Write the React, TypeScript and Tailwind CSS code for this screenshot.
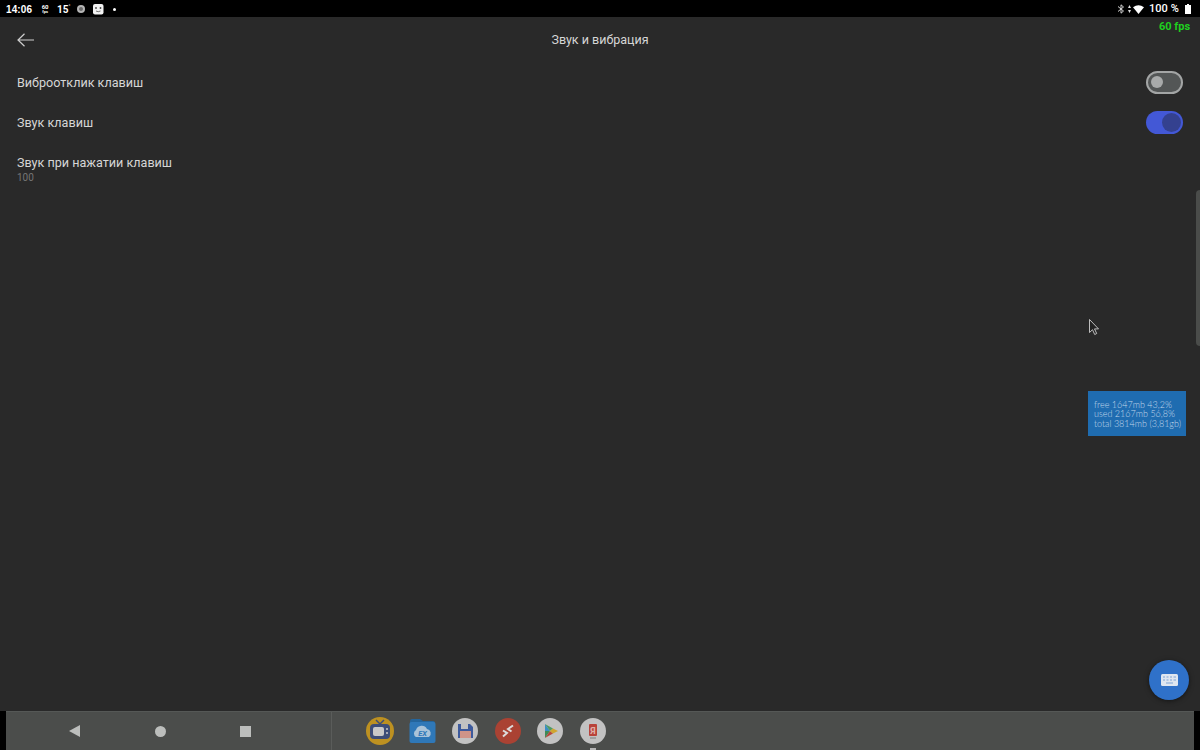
function Toggle({ on }: { on: boolean }) {
  return on ? (
    <div className="flex h-[23px] w-[37px] items-center justify-end rounded-full bg-[#4358d6] pr-[2px]">
      <div className="h-[19px] w-[19px] rounded-full bg-[#34418f]" />
    </div>
  ) : (
    <div className="flex h-[23px] w-[37px] items-center rounded-full border-2 border-[#a3a5a5] bg-[#535656] pl-[3px]">
      <div className="h-[12px] w-[12px] rounded-full bg-[#a8aaaa]" />
    </div>
  )
}

function StatusBar() {
  return (
    <div className="flex h-[17px] items-center justify-between bg-black pl-[6px] pr-[9px] pt-[1px] text-white">
      <div className="flex items-center">
        <span className="text-[10px] font-bold tracking-[0.1px] font-['Liberation_Sans',sans-serif]">14:06</span>
        <div className="ml-[9px] flex w-[8px] flex-col items-center text-[6px] font-bold leading-[5px]">
          <span>60</span>
          <span className="text-[4px]">fps</span>
        </div>
        <span className="ml-[8px] text-[10px] font-bold">15</span>
        <span className="mb-[4px] text-[5px] font-bold">°</span>
        <svg className="ml-[5px]" width="10" height="10" viewBox="0 0 10 10">
          <circle cx="5" cy="5" r="4" fill="#b5b5b5" />
          <circle cx="5" cy="5" r="2" fill="#6a6a6a" />
        </svg>
        <svg className="ml-[6px]" width="12" height="12" viewBox="0 0 12 12">
          <rect x="1" y="1" width="10.5" height="10.5" rx="2" fill="#f2f2f2" />
          <circle cx="4" cy="5" r="0.9" fill="#444" />
          <circle cx="8.5" cy="5" r="0.9" fill="#444" />
          <path d="M4 8q2.2 1.4 4.5 0" stroke="#555" strokeWidth="0.8" fill="none" />
        </svg>
        <div className="ml-[9px] h-[3px] w-[3px] rounded-full bg-white" />
      </div>
      <div className="flex items-center">
        <svg width="8" height="10" viewBox="0 0 8 10" fill="none" stroke="#d5d5d5" strokeWidth="1">
          <path d="M1 2.5 6.5 7 4 9.2V.8L6.5 3 1 7.5" />
        </svg>
        <svg className="ml-[3px]" width="3" height="10" viewBox="0 0 3 10" fill="#e0e0e0">
          <path d="M1.5 1 3 4H0zM1.5 9 0 6h3z" />
        </svg>
        <svg className="ml-[2px]" width="11" height="9" viewBox="0 0 11 9" fill="#fff">
          <path d="M0 2.2Q5.500-1.500 11 2.200L5.500 9z" />
        </svg>
        <span className="ml-[5px] text-[11px] font-medium tracking-[0.1px]">100 %</span>
        <svg className="ml-[6px]" width="6" height="10" viewBox="0 0 6 10" fill="#fff">
          <path d="M2 0h2v1h2v9H0V1h2z" />
        </svg>
      </div>
    </div>
  )
}

function SettingRow({ label, sub, on }: { label: string; sub?: string; on?: boolean }) {
  return (
    <div className={sub ? 'flex flex-col px-[17px] pt-[12px]' : 'flex h-[40px] items-center justify-between px-[17px]'}>
      <span className={sub ? 'text-[12.6px] leading-[18px] text-[#d6d6d6]' : 'pt-[1px] text-[12.6px] leading-[18px] text-[#d6d6d6]'}>{label}</span>
      {sub && <span className="text-[10px] leading-[12px] text-[#757575]">{sub}</span>}
      {on !== undefined && <Toggle on={on} />}
    </div>
  )
}

function DockSlot({ children }: { children: React.ReactNode }) {
  return <div className="flex w-[28px] justify-center">{children}</div>
}

function DockIcons() {
  return (
    <div className="ml-[34px] flex items-center gap-[14.6px]">
      <DockSlot>
        <svg width="28" height="28" viewBox="0 0 28 28">
          <circle cx="14" cy="14" r="14" fill="#bd9121" />
          <path d="M10 3l4 4 4-4" stroke="#3d4d78" strokeWidth="1.500" fill="none" />
          <rect x="4" y="7" width="20" height="15" rx="4" fill="#3d4d78" />
          <rect x="7" y="10" width="11" height="9" rx="2" fill="#c9c9c9" />
          <circle cx="21" cy="12" r="1" fill="#c9c9c9" />
          <circle cx="21" cy="16" r="1" fill="#c9c9c9" />
        </svg>
      </DockSlot>
      <DockSlot>
        <svg width="27" height="28" viewBox="0 0 27 28">
          <path d="M1 4a2 2 0 0 1 2-2h8l3 2h10a2 2 0 0 1 2 2v4H1z" fill="#24659c" />
          <rect x="0.500" y="5" width="26" height="21" rx="2" fill="#2f78b8" />
          <path d="M7 20a4 4 0 0 1 0-7 6 6 0 0 1 11-1 4.500 4.500 0 0 1 2 8z" fill="#a9c3d9" />
          <text x="13.500" y="19" fontSize="7.500" fontStyle="italic" fontWeight="700" textAnchor="middle" fill="#2f78b8">EX</text>
        </svg>
      </DockSlot>
      <DockSlot>
        <svg width="26" height="26" viewBox="0 0 26 26">
          <circle cx="13" cy="13" r="13" fill="#c2c2c2" />
          <path d="M6 6h12l3 3v11H6z" fill="#3d5a9c" />
          <rect x="9" y="6" width="7" height="5" fill="#c2c2c2" />
          <rect x="8" y="13" width="11" height="7" fill="#cf9488" />
        </svg>
      </DockSlot>
      <DockSlot>
        <svg width="26" height="26" viewBox="0 0 26 26">
          <circle cx="13" cy="13" r="13" fill="#aa4233" />
          <path d="M18 7.500 13 11l3.500 2.500M8 12.500l4 2.500-4 3.500" stroke="#dcdcdc" strokeWidth="2" fill="none" />
        </svg>
      </DockSlot>
      <DockSlot>
        <svg width="26" height="26" viewBox="0 0 26 26">
          <circle cx="13" cy="13" r="13" fill="#c2c2c2" />
          <path d="M8 6v7h5z" fill="#3a8fc4" />
          <path d="M8 20v-7h5z" fill="#3f8a57" />
          <path d="M8 6l5 7 3-2.500z" fill="#4f9a66" />
          <path d="M8 20l5-7 3 2.500z" fill="#b6483c" />
          <path d="M16 10.500 21 13l-5 2.500-3-2.500z" fill="#cfa52e" />
        </svg>
      </DockSlot>
      <DockSlot>
        <svg width="26" height="26" viewBox="0 0 26 26">
          <circle cx="13" cy="13" r="13" fill="#c2c2c2" />
          <rect x="9" y="6" width="8" height="12" rx="1" fill="#b8433a" />
          <path d="M10 20h6" stroke="#a0a0a0" strokeWidth="2" />
          <text x="13" y="15.500" fontSize="9" fontWeight="700" textAnchor="middle" fill="#e0b0a8">Я</text>
        </svg>
      </DockSlot>
    </div>
  )
}

function NavBar() {
  return (
    <div className="flex h-[39px] bg-black px-[6px]">
      <div className="relative flex flex-1 items-center border-t border-[#555856] bg-[#4b4d4b]">
        <div className="flex h-full w-[326px] shrink-0 items-center border-r border-[#5a5c5a] pl-[63px]">
          <svg width="11" height="12" viewBox="0 0 11 12" fill="#bcbebc">
            <path d="M0 6 11 0v12z" />
          </svg>
          <div className="ml-[75px] h-[11px] w-[11px] rounded-full bg-[#bcbebc]" />
          <div className="ml-[74px] h-[11px] w-[11px] bg-[#bcbebc]" />
        </div>
        <DockIcons />
        <div className="absolute bottom-0 left-[584px] h-[2px] w-[6px] bg-[#b5b5b5]" />
      </div>
    </div>
  )
}

export default function App() {
  return (
    <div className="relative flex h-[750px] w-[1200px] flex-col overflow-hidden bg-[#292929] font-['Roboto',sans-serif]">
      <StatusBar />
      <div className="flex-1">
        <div className="relative flex h-[45px] items-center justify-center">
          <svg className="absolute left-[17px] top-[16px]" width="17" height="14" viewBox="0 0 17 14" fill="none" stroke="#cfcfcf" strokeWidth="1.200">
            <path d="M17 7H1M7.500 .8 1 7l6.500 6.200" />
          </svg>
          <span className="pt-[2px] text-[12.5px] text-[#d6d6d6]">Звук и вибрация</span>
        </div>
        <SettingRow label="Виброотклик клавиш" on={false} />
        <SettingRow label="Звук клавиш" on={true} />
        <SettingRow label="Звук при нажатии клавиш" sub="100" />
      </div>
      <NavBar />

      <span className="absolute left-[1159px] top-[19px] whitespace-nowrap text-[11px] font-bold text-[#1fd01f]">60 fps</span>

      <div className="absolute right-0 top-[190px] h-[156px] w-[4px] rounded-l-[6px] bg-[#4a4c4a]" />

      <svg className="absolute left-[1088px] top-[318px]" width="12" height="18" viewBox="0 0 12 18">
        <path d="M1.500 1.500v13l3-2.800 2.200 4.800 2-1-2.200-4.600h4z" fill="#222" stroke="#cfcfcf" strokeWidth="0.900" />
      </svg>

      <div className="absolute left-[1088px] top-[391px] flex h-[45px] w-[98px] flex-col justify-center whitespace-nowrap bg-[#1f6cb0] pl-[6px] pt-[1px] text-[9px] font-light leading-[9.500px] text-[#c0d6ea] font-['Lato',sans-serif]">
        <span>free 1647mb 43,2%</span>
        <span>used 2167mb 56,8%</span>
        <span>total 3814mb (3,81gb)</span>
      </div>

      <div className="absolute left-[1149px] top-[660px] flex h-[40px] w-[40px] items-center justify-center rounded-full bg-[#2f71c9] shadow-[0_1px_5px_rgba(0,0,0,0.5)]">
        <svg width="17" height="12" viewBox="0 0 17 12">
          <rect width="17" height="12" rx="1.500" fill="#dfe6f0" />
          <path d="M2 3h2M5.500 3h2M9 3h2M12.500 3h2.500M2 6h2M5.500 6h2M9 6h2M12.500 6h2.500M5 9h7" stroke="#7fa3d6" strokeWidth="1.200" />
        </svg>
      </div>
    </div>
  )
}
